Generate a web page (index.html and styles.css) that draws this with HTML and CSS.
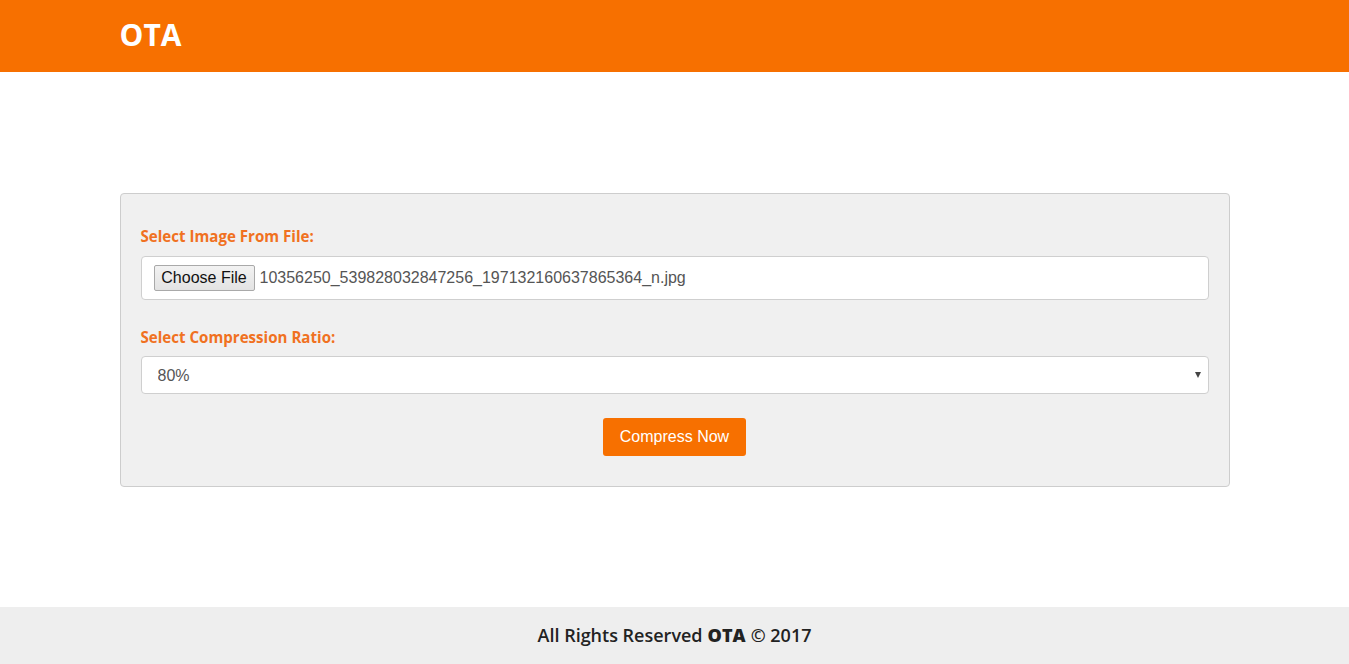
FILE: index.html
```html
<!DOCTYPE html>
<html lang="en">
<head>
<meta charset="utf-8">
<title>OTA</title>
<link rel="stylesheet" href="styles.css">
</head>
<body>
<header class="topbar">
  <div class="container">
    <span class="brand">OTA</span>
  </div>
</header>
<main class="main">
  <div class="container">
    <form class="panel">
      <label class="field-label">Select Image From File:</label>
      <div class="file-box">
        <button type="button" class="file-btn">Choose File</button>
        <span class="file-name">10356250_539828032847256_197132160637865364_n.jpg</span>
      </div>
      <label class="field-label second">Select Compression Ratio:</label>
      <div class="select-wrap">
        <select class="select">
          <option>80%</option>
          <option>60%</option>
          <option>40%</option>
        </select>
      </div>
      <div class="actions">
        <button type="button" class="btn-primary">Compress Now</button>
      </div>
    </form>
  </div>
</main>
<footer class="footer">
  All Rights Reserved <strong>OTA</strong> &copy; 2017
</footer>
</body>
</html>
```
FILE: styles.css
```css
* { box-sizing: border-box; }
html, body { margin: 0; padding: 0; }
body {
  min-height: 100vh;
  display: flex;
  flex-direction: column;
  font-family: "Open Sans", "Liberation Sans", sans-serif;
  background: #fff;
}
.container {
  width: 1140px;
  margin: 0 auto;
  padding: 0 15px;
}
.topbar {
  background: #f77000;
  height: 72px;
  display: flex;
  align-items: center;
}
.brand {
  display: block;
  color: #fff;
  font-weight: 700;
  font-size: 30px;
  line-height: 1;
  margin-top: -3px;
}
.main {
  flex: 1;
  padding-top: 121px;
}
.panel {
  background: #f0f0f0;
  border: 1px solid #cdcdcd;
  border-radius: 4px;
  padding: 32px 20px 30px;
}
.field-label {
  display: block;
  color: #f07121;
  font-weight: 700;
  font-size: 15.1px;
  line-height: 20px;
  margin-bottom: 10px;
}
.field-label.second {
  margin-top: 27px;
  margin-bottom: 9px;
}
.file-box {
  height: 44px;
  background: #fff;
  border: 1px solid #cfcfcf;
  border-radius: 4px;
  display: flex;
  align-items: center;
  padding: 0 12px;
  gap: 5px;
  font-family: "Liberation Sans", Arial, sans-serif;
}
.file-btn {
  height: 26px;
  width: 101px;
  font-family: "Liberation Sans", Arial, sans-serif;
  font-size: 16px;
  color: #111;
  background: linear-gradient(#f2f2f2, #e3e3e3);
  border: 1px solid #a9a9a9;
  border-radius: 2px;
  padding: 0;
}
.file-name {
  font-size: 16px;
  color: #555;
}
.select-wrap {
  position: relative;
}
.select-wrap::after {
  content: "";
  position: absolute;
  right: 8px;
  top: 16px;
  border-left: 3px solid transparent;
  border-right: 3px solid transparent;
  border-top: 6px solid #444;
}
.select {
  -webkit-appearance: none;
  appearance: none;
  width: 100%;
  height: 38px;
  background: #fff;
  border: 1px solid #cfcfcf;
  border-radius: 4px;
  padding: 0 16px;
  font-family: "Liberation Sans", Arial, sans-serif;
  font-size: 16px;
  color: #555;
  outline: none;
}
.actions {
  display: flex;
  justify-content: center;
  margin-top: 24px;
}
.btn-primary {
  height: 38px;
  width: 143px;
  background: #f77000;
  color: #fff;
  border: none;
  border-radius: 3px;
  font-family: "Liberation Sans", Arial, sans-serif;
  font-size: 16px;
  padding: 0;
}
.footer {
  height: 57px;
  background: #eeeeee;
  display: flex;
  align-items: center;
  justify-content: center;
  font-weight: 600;
  font-size: 18px;
  color: #222;
  padding-bottom: 2px;
}
.footer strong { font-weight: 800; margin: 0 5px; }
```
